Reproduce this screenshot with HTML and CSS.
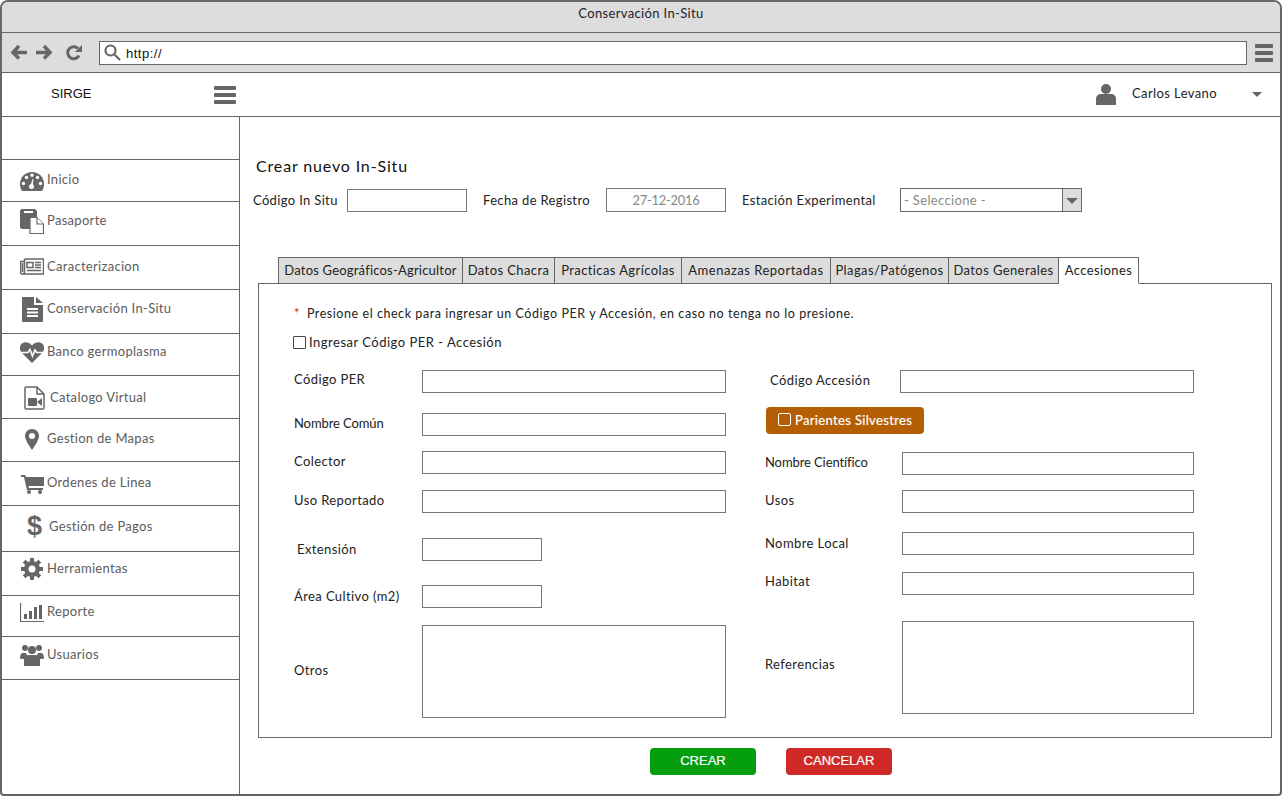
FILE: index.html
```html
<!DOCTYPE html>
<html lang="en">

<head>
    <meta charset="UTF-8">
    <meta name="viewport" content="width=device-width, initial-scale=1.0">
    <title>Conservación In-Situ</title>
    <link rel="stylesheet" href="styles.css">
</head>

<body>
    <div class="window">
        <div class="titlebar">Conservación In-Situ</div>

        <div class="toolbar">
            <svg class="nav-icon" viewBox="0 0 17 15"><path d="M8 1L2 7.500l6 6M2.500 7.500H16" /></svg>
            <svg class="nav-icon" viewBox="1 0 17 15"><path d="M9 1l6 6.500-6 6M14.500 7.500H1" /></svg>
            <svg class="nav-icon reload" viewBox="0 0 16 16"><path d="M13 10.500A6 6 0 1 1 12 3.500" /><path class="solid" d="M9 7h7V0z" /></svg>
            <div class="address">
                <svg class="search" viewBox="0 0 17 17"><circle cx="6.500" cy="6.500" r="5" /><path d="M10.500 10.500l5.500 5.500" /></svg>
                <span>http://</span>
            </div>
            <div class="burger small"><i></i><i></i><i></i></div>
        </div>

        <header class="appbar">
            <div class="brand">SIRGE</div>
            <div class="burger"><i></i><i></i><i></i></div>
            <div class="user">
                <svg class="user-icon" viewBox="0 0 20 21"><circle cx="10" cy="5" r="5" /><path d="M0 21v-6c0-3 2-5 5-5h10c3 0 5 2 5 5v6z" /></svg>
                <span class="user-name">Carlos Levano</span>
                <span class="caret"></span>
            </div>
        </header>

        <div class="main">
            <aside class="sidebar">
                <nav class="menu">
                    <a class="item item-inicio">
                        <svg viewBox="0 0 24 19"><path d="M12 0C5 0 0 5.500 0 12c0 2.500.7 5 2 7h20c1.300-2 2-4.500 2-7C24 5.500 19 0 12 0z" /><g class="hole"><circle cx="3.500" cy="11.500" r="1.700" /><circle cx="6.500" cy="5.500" r="1.700" /><circle cx="12" cy="3.200" r="1.700" /><circle cx="17.500" cy="5.500" r="1.700" /><circle cx="20.500" cy="11.500" r="1.700" /><circle cx="11.500" cy="14.500" r="2.500" /><path d="M10.500 14l2-7 1 .3-1 7z" /></g></svg>
                        <span>Inicio</span>
                    </a>
                    <a class="item item-pasaporte">
                        <svg viewBox="0 0 24 25"><path d="M2 0h13l2 2v6l-7 .5V20H2c-1 0-2-1-2-2V2c0-1 1-2 2-2z" /><rect class="hole" x="4" y="2" width="9" height="2" /><path class="sheet" d="M10 8.500h7l6.500 6.500v9.500H10z" /><path class="sheet" d="M17 8.500V15h6.500" /></svg>
                        <span>Pasaporte</span>
                    </a>
                    <a class="item item-caracterizacion">
                        <svg viewBox="0 0 24 17"><path class="line" d="M4.500 1h19v15H2.500c-1 0-2-1-2-2V3.500h4M4.500 1v13c0 1-1 2-2 2M2.500 5v9" /><path class="line" d="M7 4.500h6v5H7zM15 4.500h6M15 7h6M15 9.500h6M7 12.500h14" /></svg>
                        <span>Caracterizacion</span>
                    </a>
                    <a class="item item-conservacion">
                        <svg viewBox="0 0 21 25"><path d="M0 1c0-.5.5-1 1-1h11v8h9v16c0 .5-.5 1-1 1H1c-.5 0-1-.5-1-1z" /><path d="M14 0l7 6h-7z" /><path class="rule" d="M5 12h11M5 15.500h11M5 19h11" /></svg>
                        <span>Conservación In-Situ</span>
                    </a>
                    <a class="item item-banco">
                        <svg viewBox="0 0 24 21"><path d="M12 21L2 11C-1 8-.5 3 2 1.500 5-.7 9 .2 12 3.500 15 .2 19-.7 22 1.500c2.500 1.500 3 6.500 0 9.500z" /><path class="pulse" d="M0 10.500h8l2-3 2.500 6.500 2.500-6 1.500 2.500h8" /></svg>
                        <span>Banco germoplasma</span>
                    </a>
                    <a class="item item-catalogo">
                        <svg viewBox="0 0 21 24"><path class="outline" d="M1 2c0-.5.5-1 1-1h11l7 7v14c0 .5-.5 1-1 1H2c-.5 0-1-.5-1-1z" /><path class="outline" d="M13 1v7h7" /><rect x="4" y="12" width="9" height="8" rx="1" /><path d="M13 16l5-4v8z" /></svg>
                        <span>Catalogo Virtual</span>
                    </a>
                    <a class="item item-mapas">
                        <svg viewBox="0 0 14 21"><path d="M7 0C3 0 0 3 0 7c0 3 4 10 7 14 3-4 7-11 7-14 0-4-3-7-7-7z" /><circle class="hole" cx="7" cy="7" r="3" /></svg>
                        <span>Gestion de Mapas</span>
                    </a>
                    <a class="item item-ordenes">
                        <svg viewBox="0 0 23 19"><path d="M0 0h4l1 2h18v9H7.500l.5 2h14v2H6L3 2H0z" /><circle cx="8" cy="17" r="2" /><circle cx="19" cy="17" r="2" /></svg>
                        <span>Ordenes de Linea</span>
                    </a>
                    <a class="item item-pagos">
                        <b class="dollar">$</b>
                        <span>Gestión de Pagos</span>
                    </a>
                    <a class="item item-herramientas">
                        <svg viewBox="0 0 22 22"><circle cx="11" cy="11" r="8" /><g class="teeth"><path d="M11 0v22M0 11h22M3.200 3.200l15.600 15.600M18.800 3.200L3.200 18.800" /></g><circle class="hole" cx="11" cy="11" r="3.500" /></svg>
                        <span>Herramientas</span>
                    </a>
                    <a class="item item-reporte">
                        <svg viewBox="0 0 24 19"><path class="axis" d="M.5 0v18.500H24" /><rect x="4" y="11" width="3" height="5" /><rect x="9" y="8" width="3" height="8" /><rect x="14" y="4" width="3" height="12" /><rect x="19" y="2" width="3" height="14" /></svg>
                        <span>Reporte</span>
                    </a>
                    <a class="item item-usuarios">
                        <svg viewBox="0 0 24 22"><circle cx="5" cy="4" r="3" /><circle cx="19" cy="4" r="3" /><circle cx="12" cy="6" r="4" /><path d="M0 14c0-3 1-5 3-5h3c1 1 1 3 0 6H1zM24 14c0-3-1-5-3-5h-3c-1 1-1 3 0 6h5z" /><path d="M4 22v-6c0-3 2-5 5-5h6c3 0 5 2 5 5v6z" /></svg>
                        <span>Usuarios</span>
                    </a>
                </nav>
            </aside>

            <section class="content">
                <h2>Crear nuevo In-Situ</h2>

                <div class="top-form">
                    <label class="lbl-code">Código In Situ</label>
                    <div class="box box-code"></div>
                    <label class="lbl-date">Fecha de Registro</label>
                    <div class="box box-date">27-12-2016</div>
                    <label class="lbl-station">Estación Experimental</label>
                    <div class="select">
                        <span>- Seleccione -</span>
                        <div class="select-btn"><i></i></div>
                    </div>
                </div>

                <div class="tabs">
                    <div class="tab tab-1">Datos Geográficos-Agricultor</div>
                    <div class="tab tab-2">Datos Chacra</div>
                    <div class="tab tab-3">Practicas Agrícolas</div>
                    <div class="tab tab-4">Amenazas Reportadas</div>
                    <div class="tab tab-5">Plagas/Patógenos</div>
                    <div class="tab tab-6">Datos Generales</div>
                    <div class="tab tab-7 active">Accesiones</div>
                </div>

                <div class="panel">
                    <p class="note"><span class="star">*</span>Presione el check para ingresar un Código PER y Accesión, en caso no tenga no lo presione.</p>
                    <div class="check-row"><span class="check"></span>Ingresar Código PER - Accesión</div>

                    <div class="columns">
                        <div class="col col-left">
                            <div class="field"><label>Código PER</label><div class="box wide"></div></div>
                            <div class="field"><label class="tight">Nombre Común</label><div class="box wide"></div></div>
                            <div class="field"><label>Colector</label><div class="box wide"></div></div>
                            <div class="field"><label>Uso Reportado</label><div class="box wide"></div></div>
                            <div class="field"><label class="indent">Extensión</label><div class="box short"></div></div>
                            <div class="field"><label>Área Cultivo (m2)</label><div class="box short"></div></div>
                            <div class="field tall"><label>Otros</label><div class="box area"></div></div>
                        </div>
                        <div class="col col-right">
                            <div class="field first"><label>Código Accesión</label><div class="box wide"></div></div>
                            <div class="wild"><span class="check light"></span>Parientes Silvestres</div>
                            <div class="field"><label class="tight">Nombre Científico</label><div class="box wide"></div></div>
                            <div class="field"><label>Usos</label><div class="box wide"></div></div>
                            <div class="field"><label>Nombre Local</label><div class="box wide"></div></div>
                            <div class="field"><label>Habitat</label><div class="box wide"></div></div>
                            <div class="field tall"><label>Referencias</label><div class="box area"></div></div>
                        </div>
                    </div>
                </div>

                <div class="actions">
                    <button class="btn btn-create">CREAR</button>
                    <button class="btn btn-cancel">CANCELAR</button>
                </div>
            </section>
        </div>
    </div>
</body>

</html>
```

FILE: styles.css
```css
* {
    box-sizing: border-box;
}

body {
    margin: 0;
    background-color: #fff;
    font-family: 'Lato', sans-serif;
    font-size: 13px;
    color: #222;
}

.window {
    width: 1282px;
    height: 796px;
    border: 2px solid #666;
    border-radius: 8px 8px 4px 4px;
    overflow: hidden;
    display: flex;
    flex-direction: column;
}

.titlebar {
    height: 31px;
    flex: none;
    background-color: #ddd;
    border-bottom: 1px solid #666;
    text-align: center;
    line-height: 23px;
    letter-spacing: 0.35px;
}

.toolbar {
    height: 40px;
    flex: none;
    background-color: #ddd;
    border-bottom: 1px solid #666;
    display: flex;
    align-items: center;
    padding-left: 9px;
}

.nav-icon {
    width: 17px;
    height: 15px;
    flex: none;
    margin-right: 8px;
    fill: none;
    stroke: #666;
    stroke-width: 3.500;
    overflow: visible;
}

.reload {
    width: 16px;
    height: 16px;
    margin: 0 17px 0 5px;
    stroke-width: 3;
}

.reload .solid {
    fill: #666;
    stroke: none;
}

.address {
    width: 1148px;
    height: 24px;
    flex: none;
    background-color: #fff;
    border: 1px solid #666;
    display: flex;
    align-items: center;
    padding-left: 4px;
    font-family: 'Liberation Sans', sans-serif;
    color: #111;
}

.address span {
    padding-top: 1px;
    letter-spacing: 0.5px;
}

.search {
    width: 17px;
    height: 17px;
    margin-right: 5px;
    fill: none;
    stroke: #666;
    stroke-width: 2.200;
}

.burger {
    width: 22px;
    display: flex;
    flex-direction: column;
    gap: 3px;
}

.burger i {
    height: 4px;
    border-radius: 1px;
    background-color: #666;
}

.burger.small {
    width: 18px;
    flex: none;
    margin-left: 8px;
}

.appbar {
    height: 44px;
    flex: none;
    border-bottom: 1px solid #666;
    display: flex;
    align-items: center;
}

.brand {
    width: 212px;
    padding: 0 0 2px 49px;
    font-family: 'Liberation Sans', sans-serif;
    color: #111;
}

.user {
    margin-left: auto;
    display: flex;
    align-items: center;
}

.user-icon {
    width: 20px;
    height: 21px;
    margin-right: 16px;
    fill: #666;
}

.user-name {
    width: 120px;
    padding-bottom: 4px;
    letter-spacing: 0.4px;
}

.caret {
    width: 0;
    height: 0;
    margin-right: 18px;
    border-left: 5.500px solid transparent;
    border-right: 5.500px solid transparent;
    border-top: 5px solid #666;
}

.main {
    flex: 1;
    display: flex;
    min-height: 0;
}

.sidebar {
    width: 238px;
    flex: none;
    border-right: 1px solid #666;
    padding-top: 42px;
}

.menu {
    display: grid;
    grid-template-rows: 42px 44px 44px 44px 42px 43px 43px 44px 46px 44px 41px 43px;
    border-top: 1px solid #666;
}

.item {
    display: grid;
    grid-template-columns: var(--text-x, 45px) 1fr;
    align-items: start;
    border-bottom: 1px solid #666;
    color: #5c5c5c;
    letter-spacing: 0.3px;
}

.item svg {
    width: var(--icon-w);
    height: var(--icon-h);
    margin: var(--icon-y) 0 0 var(--icon-x);
    fill: #666;
}

.item span {
    margin-top: var(--text-y);
}

.item-inicio { --icon-x: 18px; --icon-y: 12px; --icon-w: 24px; --icon-h: 19px; --text-y: 11px; }
.item-pasaporte { --icon-x: 18px; --icon-y: 7px; --icon-w: 24px; --icon-h: 25px; --text-y: 10px; }
.item-caracterizacion { --icon-x: 18px; --icon-y: 12px; --icon-w: 24px; --icon-h: 17px; --text-y: 12px; }
.item-conservacion { --icon-x: 20px; --icon-y: 7px; --icon-w: 21px; --icon-h: 25px; --text-y: 10px; }
.item-banco { --icon-x: 18px; --icon-y: 8px; --icon-w: 24px; --icon-h: 21px; --text-y: 9px; }
.item-catalogo { --icon-x: 22px; --icon-y: 10px; --icon-w: 21px; --icon-h: 24px; --text-y: 13px; --text-x: 48px; }
.item-mapas { --icon-x: 23px; --icon-y: 10px; --icon-w: 14px; --icon-h: 21px; --text-y: 11px; }
.item-ordenes { --icon-x: 19px; --icon-y: 13px; --icon-w: 23px; --icon-h: 19px; --text-y: 12px; }
.item-pagos { --text-y: 12px; --text-x: 47px; }
.item-herramientas { --icon-x: 19px; --icon-y: 6px; --icon-w: 22px; --icon-h: 22px; --text-y: 8px; }
.item-reporte { --icon-x: 18px; --icon-y: 7px; --icon-w: 24px; --icon-h: 19px; --text-y: 7px; }
.item-usuarios { --icon-x: 18px; --icon-y: 7px; --icon-w: 24px; --icon-h: 22px; --text-y: 9px; }

.dollar {
    font-family: 'Liberation Sans', sans-serif;
    font-size: 27px;
    line-height: 31px;
    margin: 5px 0 0 25px;
    color: #666;
    letter-spacing: 0;
}

.hole {
    fill: #fff;
}

.sheet {
    fill: #fff;
    stroke: #666;
    stroke-width: 1.200;
}

.line,
.outline {
    fill: none;
    stroke: #666;
    stroke-width: 1.500;
}

.rule {
    fill: none;
    stroke: #fff;
    stroke-width: 1.800;
}

.pulse {
    fill: none;
    stroke: #fff;
    stroke-width: 1.600;
}

.axis {
    fill: none;
    stroke: #666;
    stroke-width: 1.200;
}

.teeth {
    fill: none;
    stroke: #666;
    stroke-width: 4;
}

.content {
    flex: 1;
    min-width: 0;
    padding: 0 8px 0 18px;
    display: flex;
    flex-direction: column;
}

h2 {
    margin: 39px 0 0 -2px;
    height: 20px;
    font-weight: 400;
    font-size: 16px;
    line-height: 20px;
    letter-spacing: 0.85px;
    color: #111;
}

.top-form {
    display: flex;
    align-items: center;
    height: 24px;
    margin: 12px 0 0 -5px;
    letter-spacing: 0.35px;
}

.box {
    border: 1px solid #777;
    background-color: #fff;
    flex: none;
}

.lbl-code { width: 94px; }
.box-code { width: 120px; height: 23px; }
.lbl-date { width: 123px; margin-left: 16px; }
.box-date { width: 120px; height: 24px; line-height: 22px; text-align: center; color: #888; letter-spacing: -0.3px; }
.lbl-station { width: 158px; margin-left: 16px; }

.select {
    width: 182px;
    height: 24px;
    border: 1px solid #666;
    display: flex;
    align-items: center;
    justify-content: space-between;
    padding-left: 3px;
    color: #888;
}

.select-btn {
    width: 19px;
    height: 22px;
    background-color: #ddd;
    border-left: 1px solid #666;
    display: flex;
    align-items: center;
    justify-content: center;
}

.select-btn i {
    border-left: 6px solid transparent;
    border-right: 6px solid transparent;
    border-top: 6px solid #666;
    margin-top: 2px;
}

.tabs {
    display: flex;
    height: 27px;
    margin: 45px 0 0 20px;
    letter-spacing: 0.4px;
    position: relative;
    z-index: 1;
}

.tab {
    height: 27px;
    background-color: #ddd;
    border: 1px solid #666;
    border-left-width: 0;
    text-align: center;
    line-height: 24px;
}

.tab-1 { width: 185px; border-left-width: 1px; letter-spacing: 0.2px; }
.tab-2 { width: 92px; }
.tab-3 { width: 127px; }
.tab-4 { width: 149px; letter-spacing: 0.5px; }
.tab-5 { width: 118px; }
.tab-6 { width: 110px; }
.tab-7 { width: 80px; }

.tab.active {
    background-color: #fff;
    border-bottom-color: #fff;
}

.panel {
    width: 1014px;
    height: 455px;
    margin-top: -1px;
    border: 1px solid #666;
    padding: 21px 0 0 35px;
    letter-spacing: 0.4px;
}

.note {
    margin: 0;
    height: 17px;
    line-height: 17px;
    font-size: 12.500px;
    letter-spacing: 0.56px;
}

.star {
    color: #d02020;
    margin-right: 7px;
}

.check-row {
    display: flex;
    align-items: center;
    height: 18px;
    margin-top: 11px;
    gap: 3px;
    margin-left: -1px;
    letter-spacing: 0.5px;
}

.check {
    width: 13px;
    height: 13px;
    border: 1px solid #444;
    border-radius: 1px;
    background-color: #fff;
}

.columns {
    display: flex;
    margin-top: 19px;
}

.col {
    display: grid;
    align-items: start;
}

.col-left {
    width: 471px;
    grid-template-rows: 43px 38px 39px 48px 47px 40px 93px;
}

.col-right {
    width: 430px;
    grid-template-rows: 37px 45px 38px 42px 40px 49px 93px;
}

.field {
    display: flex;
    align-items: center;
}

.field label {
    flex: none;
    padding-bottom: 4px;
}

.field label.tight {
    letter-spacing: -0.1px;
}

.col-left .field label {
    width: 128px;
}

.col-right .field label {
    width: 137px;
}

.col-right .field.first label {
    width: 135px;
    padding-left: 5px;
}

/* labels in the mockup are not centred on their inputs */
.col-left .field:nth-child(1) label { padding-bottom: 6px; }
.col-left .field:nth-child(5) label,
.col-left .field:nth-child(6) label,
.col-right .field:nth-child(5) label { padding-bottom: 2px; }
.col-right .field:nth-child(6) label { padding-bottom: 6px; }
.col-right .tall label { padding-bottom: 8px; }

.col-left .field label.indent {
    padding-left: 3px;
}

.wide {
    height: 23px;
}

.col-left .wide {
    width: 304px;
}

.col-right .wide {
    width: 292px;
}

.col-right .first .wide {
    width: 294px;
}

.short {
    width: 120px;
    height: 23px;
}

.area {
    height: 93px;
}

.col-left .area {
    width: 304px;
}

.col-right .area {
    width: 292px;
}

.wild {
    width: 158px;
    height: 27px;
    margin-left: 1px;
    background-color: #b55f05;
    border-radius: 4px;
    color: #fff;
    display: flex;
    align-items: center;
    padding: 0 0 2px 12px;
    gap: 4px;
    letter-spacing: 0.35px;
    -webkit-text-stroke: 0.2px #fff;
}

.check.light {
    background-color: transparent;
    border-color: #fff;
    border-radius: 2px;
}

.actions {
    display: flex;
    justify-content: flex-start;
    gap: 30px;
    margin: 10px 0 0 392px;
}

.btn {
    width: 106px;
    height: 27px;
    border: none;
    border-radius: 4px;
    color: #fff;
    font-family: 'Liberation Sans', sans-serif;
    font-size: 13px;
    padding: 0 0 3px;
    -webkit-text-stroke: 0.2px #fff;
}

.btn-create {
    background-color: #049e0e;
}

.btn-cancel {
    background-color: #cf2a27;
}
```
